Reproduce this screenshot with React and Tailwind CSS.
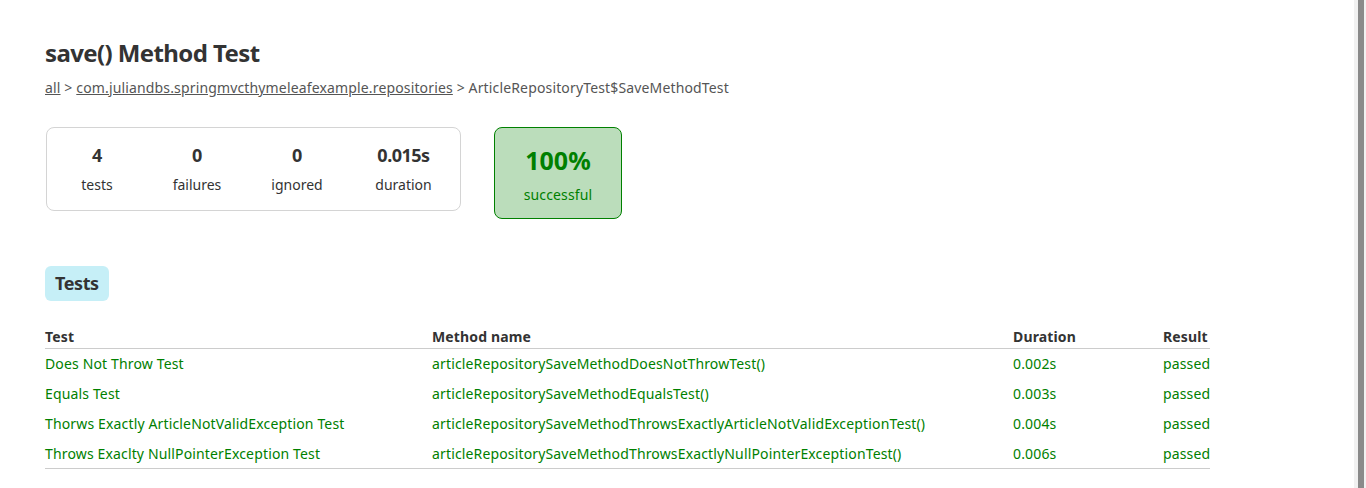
import React from 'react';

const counters = [
  { value: '4', label: 'tests' },
  { value: '0', label: 'failures' },
  { value: '0', label: 'ignored' },
  { value: '0.015s', label: 'duration' },
];

const rows = [
  ['Does Not Throw Test', 'articleRepositorySaveMethodDoesNotThrowTest()', '0.002s'],
  ['Equals Test', 'articleRepositorySaveMethodEqualsTest()', '0.003s'],
  ['Thorws Exactly ArticleNotValidException Test', 'articleRepositorySaveMethodThrowsExactlyArticleNotValidExceptionTest()', '0.004s'],
  ['Throws Exaclty NullPointerException Test', 'articleRepositorySaveMethodThrowsExactlyNullPointerExceptionTest()', '0.006s'],
];

const cols = 'grid grid-cols-[387px_581px_150px_47px]';

const App = () => {
  return (
    <div className="flex h-[488px] w-[1366px] overflow-hidden bg-white font-['Noto_Sans',sans-serif] text-[14px] tracking-[0.15px] text-[#333]">
      <div className="flex-1 pl-[45px] pt-[37px]">
        <h1 className="text-[24px] font-bold leading-[32px] tracking-[-0.6px] text-[#333]">save() Method Test</h1>
        <div className="mt-[9px] leading-[20px] text-[#555]">
          <a className="underline">all</a> &gt;{' '}
          <a className="underline">com.juliandbs.springmvcthymeleafexample.repositories</a> &gt; ArticleRepositoryTest$SaveMethodTest
        </div>

        {/* Summary */}
        <div className="mt-[29px] flex items-start gap-[33px]">
          <div className="ml-px flex h-[84px] w-[415px] rounded-lg border border-[#d4d4d4]">
            {counters.map((c, i) => (
              <div key={i} className={`${i === 3 ? 'flex-1' : 'w-[100px]'} flex flex-col items-center pt-[15px]`}>
                <div className="text-[18px] font-bold leading-[24px] tracking-[-0.5px]">{c.value}</div>
                <div className="mt-[8px] leading-[20px] tracking-normal">{c.label}</div>
              </div>
            ))}
          </div>
          <div className="flex h-[92px] w-[128px] flex-col items-center rounded-lg border border-[#008000] bg-[#bbddbb] pt-[15px] text-[#008000]">
            <div className="text-[25px] font-bold leading-[34px] tracking-normal">100%</div>
            <div className="mt-[8px] leading-[20px]">successful</div>
          </div>
        </div>

        {/* Tabs */}
        <div className="mt-[47px] flex">
          <div className="flex h-[35px] items-center rounded-md bg-[#c6eff7] px-[10px] text-[18px] font-bold tracking-[-0.4px] text-[#333]">Tests</div>
        </div>

        {/* Table */}
        <div className="mt-[26px] w-[1165px]">
          <div className={`${cols} h-[22px] border-b border-[#cccccc] font-bold leading-[20px]`}>
            <div>Test</div>
            <div>Method name</div>
            <div>Duration</div>
            <div>Result</div>
          </div>
          {rows.map((r, i) => (
            <div
              key={i}
              className={`${cols} h-[30px] items-center leading-[20px] text-[#008000] ${i === rows.length - 1 ? 'border-b border-[#cccccc]' : ''}`}
            >
              <div>{r[0]}</div>
              <div>{r[1]}</div>
              <div>{r[2]}</div>
              <div>passed</div>
            </div>
          ))}
        </div>
      </div>

      {/* scrollbar */}
      <div className="flex w-[12px] justify-center bg-[#f1f1f1] pl-[1px]">
        <div className="w-[6px] bg-[#8a8a8a]" />
      </div>
    </div>
  );
};

export default App;
